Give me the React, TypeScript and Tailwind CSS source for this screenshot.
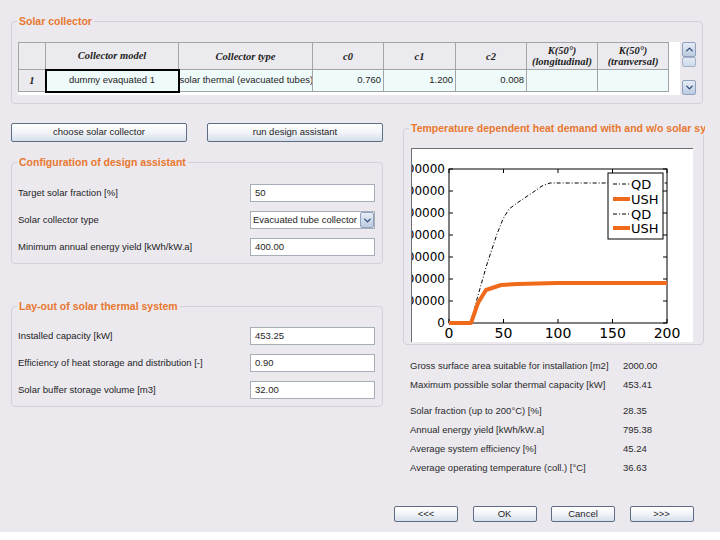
import { ChevronDown, ChevronUp } from "lucide-react";

const sans = "font-['Liberation_Sans',Arial,sans-serif]";
const serif = "font-['Liberation_Serif','Times_New_Roman',serif]";

function GroupTitle({ children }: { children: React.ReactNode }) {
  return (
    <legend className="ml-[5px] px-[2px] text-[10.5px] leading-[13px] font-bold text-[#e8772e] whitespace-nowrap overflow-hidden max-w-[296px]">
      {children}
    </legend>
  );
}

function WinButton({ label, className = "" }: { label: string; className?: string }) {
  return (
    <button
      className={`flex items-center justify-center bg-linear-to-b from-white via-[#f1f4f8] to-[#d5deea] border border-[#5d6d84] rounded-[2px] text-[9.5px] text-[#1e1e1e] ${className}`}
    >
      {label}
    </button>
  );
}

function Field({ label, value }: { label: string; value: string }) {
  return (
    <div className="flex items-center h-[18px]">
      <span className="flex-1 text-[9.5px] text-[#1e1e1e]">{label}</span>
      <div className="w-[125px] h-[18px] bg-white border border-[#a7aeb7] flex items-center pl-[4px] text-[9.5px] text-[#1e1e1e]">
        {value}
      </div>
    </div>
  );
}

function ScrollArrow({ up }: { up?: boolean }) {
  return (
    <div className="h-[15px] w-[14px] flex items-center justify-center bg-linear-to-b from-[#e6ecf5] to-[#bccbe0] border border-[#8ea0bb] rounded-[2px]">
      {up ? (
        <ChevronUp size={11} strokeWidth={3} color="#33507f" />
      ) : (
        <ChevronDown size={11} strokeWidth={3} color="#33507f" />
      )}
    </div>
  );
}

function Chart() {
  const x0 = 37;
  const x1 = 255;
  const y0 = 20;
  const y1 = 174;
  const yTicks = [0, 1, 2, 3, 4, 5, 6, 7];
  const xTicks = [0, 50, 100, 150, 200];
  const px = (d: number) => x0 + (d / 200) * (x1 - x0);
  const py = (i: number) => y1 - i * 22;
  const qd = "37,174 59,174 65,150 75,115 85,85 91,70 97,60 108,52 120,44 130,37 138,34 255,34";
  const ush = "37,174 59,174 66,154 74,141 89,136 106,135 145,134 255,134";

  return (
    <svg width="282" height="194" className="block" fontFamily="'DejaVu Sans', sans-serif">
      <rect x="0" y="0" width="282" height="194" fill="white" />
      <rect x={x0} y={y0} width={x1 - x0} height={y1 - y0} fill="white" stroke="black" strokeWidth="1" />
      {yTicks.map((i) => (
        <g key={i}>
          <line x1={x0} x2={x0 + 4} y1={py(i)} y2={py(i)} stroke="black" />
          <line x1={x1 - 4} x2={x1} y1={py(i)} y2={py(i)} stroke="black" />
          <text x="33" y={py(i)} fontSize="12" textAnchor="end" dominantBaseline="central" fill="black">
            {i === 0 ? "0" : `${i * 200000}`}
          </text>
        </g>
      ))}
      {xTicks.map((d) => (
        <g key={d}>
          <line x1={px(d)} x2={px(d)} y1={y1} y2={y1 - 4} stroke="black" />
          <line x1={px(d)} x2={px(d)} y1={y0} y2={y0 + 4} stroke="black" />
          <text x={px(d)} y="184" fontSize="14" textAnchor="middle" dominantBaseline="central" fill="black">
            {d}
          </text>
        </g>
      ))}
      <polyline points={qd} fill="none" stroke="black" strokeWidth="1" strokeDasharray="4 2 1 2" />
      <polyline points={ush} fill="none" stroke="#f06a1c" strokeWidth="4" strokeLinejoin="round" />
      <rect x="196" y="24" width="55" height="66" fill="white" stroke="black" strokeWidth="1" />
      {[35, 50, 65, 79].map((y, i) => (
        <g key={y}>
          {i % 2 === 0 ? (
            <line x1="201" x2="217" y1={y} y2={y} stroke="black" strokeDasharray="4 2 1 2" />
          ) : (
            <line x1="201" x2="218" y1={y} y2={y} stroke="#f06a1c" strokeWidth="4" />
          )}
          <text x="219" y={y} fontSize="13" dominantBaseline="central" fill="black">
            {i % 2 === 0 ? "QD" : "USH"}
          </text>
        </g>
      ))}
    </svg>
  );
}

const results: [string, string][] = [
  ["Gross surface area suitable for installation [m2]", "2000.00"],
  ["Maximum possible solar thermal capacity [kW]", "453.41"],
];
const results2: [string, string][] = [
  ["Solar fraction (up to 200°C) [%]", "28.35"],
  ["Annual energy yield [kWh/kW.a]", "795.38"],
  ["Average system efficiency [%]", "45.24"],
  ["Average operating temperature (coll.) [°C]", "36.63"],
];

function ResultRow({ label, value }: { label: string; value: string }) {
  return (
    <div className="flex items-center h-[19px] text-[9.5px] text-[#2a2a2a]">
      <span className="w-[213px]">{label}</span>
      <span>{value}</span>
    </div>
  );
}

export default function App() {
  const th = `border border-[#a3a3a8] bg-[#ebeaef] text-center font-bold italic text-[10.5px] leading-[11px] text-[#1e1e1e] ${serif}`;
  const td = "border border-[#a3a3a8] bg-[#effafa] text-[9.5px] text-[#1e1e1e]";

  return (
    <div className={`w-[720px] h-[540px] bg-white ${sans}`}>
      <div className="h-[532px] bg-[#ebe9ee] flex flex-col pt-[15px] pl-[11px]">
        <fieldset className="w-[692px] min-w-0 border border-[#d3d1d8] rounded-[4px]">
          <GroupTitle>Solar collector</GroupTitle>
          <div className="flex pl-[6px] pt-[14px] pb-[8px]">
            <div className="w-[662px] h-[53px] bg-white">
              <table className="table-fixed border-collapse w-[650px]">
                <colgroup>
                  <col className="w-[27px]" />
                  <col className="w-[133px]" />
                  <col className="w-[134px]" />
                  <col className="w-[71px]" />
                  <col className="w-[72px]" />
                  <col className="w-[71px]" />
                  <col className="w-[71px]" />
                  <col className="w-[71px]" />
                </colgroup>
                <thead>
                  <tr className="h-[27px]">
                    <th className={th}></th>
                    <th className={th}>Collector model</th>
                    <th className={th}>Collector type</th>
                    <th className={th}>c0</th>
                    <th className={th}>c1</th>
                    <th className={th}>c2</th>
                    <th className={th}>
                      K(50°)
                      <br />
                      (longitudinal)
                    </th>
                    <th className={th}>
                      K(50°)
                      <br />
                      (tranversal)
                    </th>
                  </tr>
                </thead>
                <tbody>
                  <tr className="h-[22px]">
                    <td className={th}>1</td>
                    <td className={`${td} border-2 border-black text-center`}>dummy evaquated 1</td>
                    <td className={`${td} overflow-hidden whitespace-nowrap`}>solar thermal (evacuated tubes)</td>
                    <td className={`${td} text-right pr-[2px]`}>0.760</td>
                    <td className={`${td} text-right pr-[2px]`}>1.200</td>
                    <td className={`${td} text-right pr-[2px]`}>0.008</td>
                    <td className={td}></td>
                    <td className={td}></td>
                  </tr>
                </tbody>
              </table>
            </div>
            <div className="ml-[2px] h-[53px] flex flex-col">
              <ScrollArrow up />
              <div className="h-[10px] w-[14px] bg-linear-to-b from-[#e3eaf4] to-[#cdd8e8] border border-[#a3b2c8] rounded-[2px]" />
              <div className="flex-1" />
              <ScrollArrow />
            </div>
          </div>
        </fieldset>

        <div className="flex">
          <div className="w-[372px] mt-[19px] flex flex-col">
            <div className="flex gap-[20px]">
              <WinButton label="choose solar collector" className="w-[176px] h-[19px]" />
              <WinButton label="run design assistant" className="w-[176px] h-[19px]" />
            </div>

            <fieldset className="mt-[14px] min-w-0 border border-[#d3d1d8] rounded-[4px]">
              <GroupTitle>Configuration of design assistant</GroupTitle>
              <div className="flex flex-col gap-[9px] pl-[6px] pr-[7px] pt-[15px] pb-[7px]">
                <Field label="Target solar fraction [%]" value="50" />
                <div className="flex items-center h-[18px]">
                  <span className="flex-1 text-[9.5px] text-[#1e1e1e]">Solar collector type</span>
                  <div className="w-[125px] h-[18px] bg-white border border-[#a7aeb7] flex items-center">
                    <span className="flex-1 pl-[2px] text-[9.5px] text-[#1e1e1e] whitespace-nowrap overflow-hidden">
                      Evacuated tube collector
                    </span>
                    <div className="w-[14px] h-[16px] flex items-center justify-center bg-linear-to-b from-[#e6ecf5] to-[#bccbe0] border border-[#8ea0bb] rounded-[2px]">
                      <ChevronDown size={11} strokeWidth={3} color="#33507f" />
                    </div>
                  </div>
                </div>
                <Field label="Minimum annual energy yield [kWh/kW.a]" value="400.00" />
              </div>
            </fieldset>

            <fieldset className="mt-[36px] min-w-0 border border-[#d3d1d8] rounded-[4px]">
              <GroupTitle>Lay-out of solar thermal system</GroupTitle>
              <div className="flex flex-col gap-[9px] pl-[6px] pr-[7px] pt-[14px] pb-[7px]">
                <Field label="Installed capacity [kW]" value="453.25" />
                <Field label="Efficiency of heat storage and distribution [-]" value="0.90" />
                <Field label="Solar buffer storage volume [m3]" value="32.00" />
              </div>
            </fieldset>
          </div>

          <div className="w-[301px] ml-[20px] mt-[18px] flex flex-col">
            <fieldset className="min-w-0 border border-[#d3d1d8] rounded-[4px]">
              <GroupTitle>Temperature dependent heat demand with and w/o solar system</GroupTitle>
              <div className="pl-[7px] pt-[13px] pb-[2px]">
                <div className="w-[282px] h-[194px] border-t border-l border-t-[#6f6f6f] border-l-[#6f6f6f] overflow-hidden">
                  <Chart />
                </div>
              </div>
            </fieldset>

            <div className="mt-[12px] pl-[7px] flex flex-col">
              {results.map(([l, v]) => (
                <ResultRow key={l} label={l} value={v} />
              ))}
              <div className="h-[7px]" />
              {results2.map(([l, v]) => (
                <ResultRow key={l} label={l} value={v} />
              ))}
            </div>
          </div>
        </div>

        <div className="mt-auto pb-[10px] ml-[383px] flex gap-[14.5px]">
          <WinButton label="<<<" className="w-[64px] h-[16px]" />
          <WinButton label="OK" className="w-[64px] h-[16px]" />
          <WinButton label="Cancel" className="w-[64px] h-[16px]" />
          <WinButton label=">>>" className="w-[64px] h-[16px]" />
        </div>
      </div>
    </div>
  );
}
